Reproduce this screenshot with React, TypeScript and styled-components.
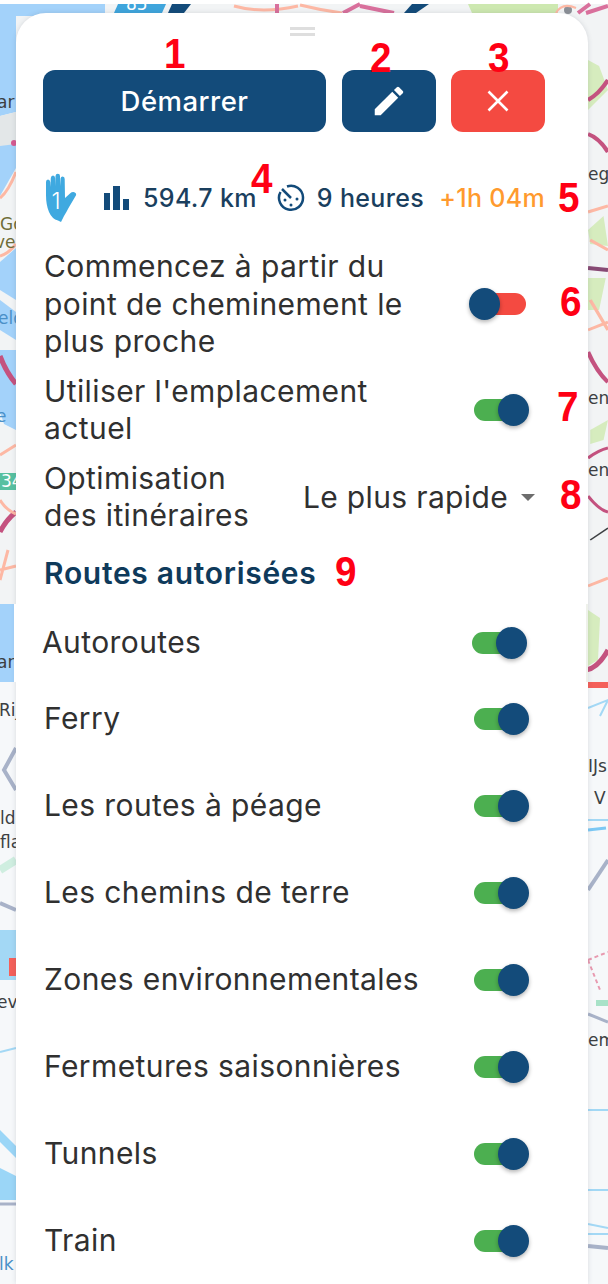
import { createGlobalStyle, styled } from "styled-components";
import { MdEdit } from "react-icons/md";

const GlobalStyle = createGlobalStyle`
  html, body {
    margin: 0;
    padding: 0;
    background: #fff;
  }
`;

const NAVY = "#134b7a";
const INK = "#303030";

const Screen = styled.div`
  position: relative;
  width: 608px;
  height: 1284px;
  overflow: hidden;
  background: #fff;
  font-family: Inter, "Noto Sans", sans-serif;
  color: ${INK};
`;

const MapLayer = styled.svg`
  position: absolute;
  top: 0;
  left: 0;
`;

const Sheet = styled.div`
  position: relative;
  box-sizing: border-box;
  width: 572px;
  height: 1271px;
  margin: 0 0 0 16px;
  top: 13px;
  padding: 14px 28px 0;
  background: #fff;
  border-radius: 30px 30px 0 0;
  box-shadow: 0 0 5px rgba(60, 70, 90, 0.16);
`;

const Grabber = styled.div`
  width: 25px;
  height: 3px;
  margin: 0 auto;
  border-top: 3px solid #dedede;
  border-bottom: 3px solid #dedede;
  background: #fff;
`;

const Actions = styled.div`
  display: flex;
  gap: 15.5px;
  margin: 34px 0 0 -1px;
`;

const ActionButton = styled.button<{ $tone?: "navy" | "red"; $wide?: boolean }>`
  display: flex;
  align-items: center;
  justify-content: center;
  width: ${(p) => (p.$wide ? "283px" : "94px")};
  height: 62px;
  padding: 0;
  border: 0;
  border-radius: 12px;
  background: ${(p) => (p.$tone === "red" ? "#f44a41" : NAVY)};
  color: #fff;
  font-family: inherit;
  font-size: 27.5px;
  font-weight: 500;
  letter-spacing: 0.5px;
`;

const Stats = styled.div`
  display: flex;
  align-items: center;
  height: 50px;
  margin-top: 41px;
`;

const StatText = styled.span<{ $accent?: boolean }>`
  font-size: 25px;
  font-weight: 500;
  letter-spacing: 0.35px;
  color: ${(p) => (p.$accent ? "#ff9a2e" : "#1a3f5e")};
  white-space: nowrap;
`;

const HandIcon = styled.svg`
  margin-right: 26px;
`;

const BarsIcon = styled.svg`
  margin-right: 13px;
`;

const ClockIcon = styled.svg`
  margin: 0 12px 0 20px;
`;

const Extra = styled.div`
  margin-left: 15px;
`;

const SettingRow = styled.div<{ $top: number }>`
  display: flex;
  align-items: center;
  justify-content: space-between;
  margin-top: ${(p) => p.$top}px;
`;

const Label = styled.div<{ $width?: number }>`
  width: ${(p) => (p.$width ? `${p.$width}px` : "auto")};
  font-size: 30px;
  line-height: 37.5px;
  letter-spacing: 0.4px;
`;

const Track = styled.div<{ $on: boolean; $shift: number }>`
  position: relative;
  flex: none;
  width: 53px;
  height: 22px;
  margin-right: ${(p) => p.$shift}px;
  border-radius: 11px;
  background: ${(p) => (p.$on ? "#4caf50" : "#f44a41")};
`;

const Thumb = styled.div<{ $on: boolean }>`
  position: absolute;
  top: -5px;
  ${(p) => (p.$on ? "right: -2px;" : "left: -4px;")}
  width: 31px;
  height: 32px;
  border-radius: 50%;
  background: ${NAVY};
  box-shadow: 0 2px 4px rgba(0, 0, 0, 0.3);
`;

const Select = styled.div`
  display: flex;
  align-items: center;
  gap: 13px;
  margin-right: 25px;
  font-size: 30px;
  letter-spacing: 0.35px;
`;

const Caret = styled.div`
  width: 0;
  height: 0;
  border-left: 7.5px solid transparent;
  border-right: 7.5px solid transparent;
  border-top: 7px solid #6d6d6d;
`;

const Heading = styled.h2`
  height: 40px;
  margin: 18px 0 0;
  font-size: 30px;
  font-weight: 600;
  letter-spacing: 0.7px;
  line-height: 40px;
  color: #0f3a5b;
`;

// this row sits on a pasted strip of the screenshot, 2px left of the sheet
const PatchedRow = styled.div`
  position: relative;
  display: flex;
  align-items: center;
  justify-content: space-between;
  height: 78px;
  margin: 11px -26px 0 -30px;
  padding: 0 0 0 28px;
  background: #fff;

  &::after {
    content: "";
    position: absolute;
    top: 0;
    right: -2px;
    width: 2px;
    height: 78px;
    background: #eef1ea;
  }
`;

const RouteList = styled.div`
  display: flex;
  flex-direction: column;
  gap: 13px;
`;

const RouteRow = styled.div`
  display: flex;
  align-items: center;
  justify-content: space-between;
  height: 74px;
`;

const Marker = styled.span<{ $x: number; $y: number }>`
  position: absolute;
  left: ${(p) => p.$x}px;
  top: ${(p) => p.$y}px;
  font-family: "Liberation Sans", sans-serif;
  font-size: 42px;
  font-weight: 700;
  line-height: 40px;
  color: #ff0014;
  transform: scaleX(0.92);
`;

const MapLabel = styled.text<{ $fill?: string }>`
  font-family: "DejaVu Sans", sans-serif;
  font-size: 17px;
  fill: ${(p) => p.$fill ?? "#3c3f42"};
`;

const routes = [
  "Ferry",
  "Les routes à péage",
  "Les chemins de terre",
  "Zones environnementales",
  "Fermetures saisonnières",
  "Tunnels",
  "Train",
];

const markers = [
  { n: "1", x: 163, y: 34 },
  { n: "2", x: 369, y: 38 },
  { n: "3", x: 487, y: 38 },
  { n: "4", x: 250, y: 159 },
  { n: "5", x: 557, y: 178 },
  { n: "6", x: 559, y: 282 },
  { n: "7", x: 556, y: 387 },
  { n: "8", x: 559, y: 475 },
  { n: "9", x: 334, y: 552 },
];

function Toggle({ on = true, shift = 33 }: { on?: boolean; shift?: number }) {
  return (
    <Track $on={on} $shift={shift}>
      <Thumb $on={on} />
    </Track>
  );
}

function MapBackdrop() {
  return (
    <MapLayer width="608" height="1284" viewBox="0 0 608 1284">
      <rect x="0" y="4" width="608" height="600" fill="#f2f4f5" />
      <rect x="0" y="604" width="608" height="680" fill="#f6f8fa" />

      {/* top band */}
      <path d="M0 4H105V16H0Z" fill="#a3d2fa" />
      <path d="M118 4H166L162 13H114Z" fill="#3fa5dc" />
      <MapLabel x="126" y="10" $fill="#ffffff" fontSize="20">85</MapLabel>
      <path d="M172 4H191L184 13H168Z" fill="#134b7a" />
      <path d="M468 4H558V13H472Z" fill="#cde8b0" />
      <path d="M234 6Q262 14 298 6M300 5Q320 10 342 13" stroke="#fdb8a4" strokeWidth="3" fill="none" />
      <path d="M277 4V13M343 13L360 4M360 6L394 13" stroke="#d9709c" strokeWidth="4" fill="none" />
      <path d="M404 13H416L429 4H412Z" fill="#134b7a" />
      <circle cx="568" cy="10" r="4" fill="#8b8f96" />
      <path d="M556 13Q562 2 576 8" stroke="#fdb8a4" strokeWidth="2" fill="none" />
      <path d="M578 13L590 4M586 13L608 6" stroke="#d9709c" strokeWidth="4" fill="none" />

      {/* left strip */}
      <path d="M0 4H16V112L0 116Z" fill="#a3d2fa" />
      <path d="M0 144H16V168L0 196Z" fill="#a3d2fa" />
      <path d="M0 116L16 112V144L0 146Z" fill="#e3e7e8" />
      <path d="M0 198Q8 192 16 172" stroke="#fdb8a4" strokeWidth="3" fill="none" />
      <path d="M0 256Q8 254 16 244" stroke="#fdb8a4" strokeWidth="3" fill="none" />
      <path d="M0 262L16 248V300L0 290Z" fill="#a3d2fa" />
      <path d="M0 300L16 312V340L0 330Z" fill="#a3d2fa" />
      <path d="M0 350H16V430L4 424L0 412Z" fill="#a3d2fa" />
      <path d="M0 356Q6 372 16 384" stroke="#c4527f" strokeWidth="5" fill="none" />
      <path d="M0 532Q6 520 16 512" stroke="#c4527f" strokeWidth="5" fill="none" />
      <path d="M0 455L16 445M0 500Q6 510 16 514M0 570L16 566M0 580L8 550" stroke="#fdb8a4" strokeWidth="3" fill="none" />
      <rect x="0" y="473" width="16" height="17" fill="#57c0a0" />
      <circle cx="14" cy="143" r="3" fill="#d65a91" />
      <MapLabel x="-3" y="108">ar</MapLabel>
      <MapLabel x="0" y="230" $fill="#6f6d38">Go</MapLabel>
      <MapLabel x="-5" y="248" $fill="#6f6d38">ver</MapLabel>
      <MapLabel x="-2" y="324" $fill="#4a90c8">eld</MapLabel>
      <MapLabel x="-4" y="422" $fill="#4a90c8">e</MapLabel>
      <MapLabel x="1" y="487" $fill="#ffffff" fontSize="14">34</MapLabel>

      {/* left patch */}
      <rect x="0" y="604" width="15" height="78" fill="#a3d2fa" />
      <MapLabel x="-3" y="668">ar</MapLabel>
      <MapLabel x="-1" y="716">Rij</MapLabel>
      <path d="M16 748L4 770L16 790" stroke="#a8b2c8" strokeWidth="4" fill="none" />
      <MapLabel x="0" y="824">lde</MapLabel>
      <MapLabel x="0" y="848">fla</MapLabel>
      <path d="M0 870L16 860" stroke="#cfeee0" strokeWidth="8" fill="none" />
      <path d="M0 903L16 910" stroke="#a8b2c8" strokeWidth="4" fill="none" />
      <path d="M0 930H16V980H0Z" fill="#a3d8f5" />
      <rect x="9" y="958" width="7" height="18" fill="#f4605a" />
      <MapLabel x="-3" y="1008">ev</MapLabel>
      <path d="M0 1052L16 1048" stroke="#a3d8f5" strokeWidth="2" fill="none" />
      <path d="M0 1130L16 1146V1158L0 1142Z" fill="#9bd6f7" />
      <path d="M0 1168L16 1176V1200H0Z" fill="#9bd6f7" />
      <path d="M0 1204H16" stroke="#a8b2c8" strokeWidth="3" fill="none" />
      <MapLabel x="-1" y="1270" $fill="#4a90c8">lk</MapLabel>

      {/* right strip */}
      <g transform="translate(588 0) scale(1.11 1) translate(-590 0)">
        <path d="M590 60L600 66L608 90L590 110Z" fill="#d6ecbe" />
        <path d="M590 100Q600 94 608 80" stroke="#c4527f" strokeWidth="4" fill="none" />
        <path d="M590 134Q600 138 608 152" stroke="#c4527f" strokeWidth="4" fill="none" />
        <path d="M590 230L604 216L608 246L592 244Z" fill="#d6ecbe" />
        <path d="M590 212L608 206M592 240L608 250" stroke="#fdb8a4" strokeWidth="3" fill="none" />
        <path d="M590 268L608 270" stroke="#874a74" strokeWidth="4" fill="none" />
        <path d="M590 278H606L600 310H590Z" fill="#d6ecbe" />
        <path d="M590 330L608 322M592 300L608 330" stroke="#fdb8a4" strokeWidth="3" fill="none" />
        <path d="M590 352Q598 372 608 382" stroke="#c4527f" strokeWidth="4" fill="none" />
        <path d="M592 430L608 420L604 440L592 444Z" fill="#d6ecbe" />
        <path d="M590 458Q600 450 608 448M590 496Q600 510 608 512" stroke="#c4527f" strokeWidth="3" fill="none" />
        <path d="M592 540L608 528" stroke="#3c3f42" strokeWidth="1.5" fill="none" />
        <path d="M590 586L608 578" stroke="#fdb8a4" strokeWidth="3" fill="none" />
      </g>
      <MapLabel x="588" y="180">eg</MapLabel>
      <MapLabel x="588" y="404">en</MapLabel>
      <MapLabel x="588" y="476">en</MapLabel>

      {/* right patch */}
      <rect x="586" y="604" width="22" height="78" fill="#f2f4f5" />
      <path d="M588 610L600 618L598 660L588 666Z" fill="#d6ecbe" />
      <path d="M586 670Q598 668 608 650" stroke="#c4527f" strokeWidth="5" fill="none" />
      <rect x="588" y="682" width="20" height="6" fill="#f4605a" />
      <path d="M588 708L608 700L600 716M588 820H608" stroke="#a3d8f5" strokeWidth="2" fill="none" />
      <MapLabel x="588" y="772">IJs</MapLabel>
      <MapLabel x="594" y="804">V</MapLabel>
      <path d="M588 830L606 828" stroke="#7cc8f4" strokeWidth="3" fill="none" />
      <path d="M588 890L608 860" stroke="#a8b2c8" strokeWidth="4" fill="none" />
      <path d="M588 960L600 990M588 960L608 952" stroke="#e89ab0" strokeWidth="2" strokeDasharray="4 3" fill="none" />
      <rect x="596" y="1000" width="12" height="6" fill="#a8e2c8" />
      <path d="M588 1014L608 1022" stroke="#a8b2c8" strokeWidth="3" fill="none" />
      <MapLabel x="588" y="1046">em</MapLabel>
      <path d="M588 1110H608M588 1190H608M588 1224L608 1228M588 1234H608" stroke="#a3d8f5" strokeWidth="2" fill="none" />
      <path d="M588 1246L608 1248" stroke="#a8b2c8" strokeWidth="4" fill="none" />
    </MapLayer>
  );
}

export default function App() {
  return (
    <Screen>
      <GlobalStyle />
      <MapBackdrop />
      <Sheet>
        <Grabber />
        <Actions>
          <ActionButton $wide>Démarrer</ActionButton>
          <ActionButton>
            <MdEdit size={38} />
          </ActionButton>
          <ActionButton $tone="red">
            <svg width="22" height="22" viewBox="0 0 22 22" fill="none" stroke="#fff" strokeWidth="2.6">
              <path d="M1.500 1.500L20.500 20.500M20.500 1.500L1.500 20.500" />
            </svg>
          </ActionButton>
        </Actions>

        <Stats>
          <HandIcon width="34" height="50" viewBox="0 0 34 50">
            <path
              d="M2 22 L2 9 Q2 6.500 4 6.500 Q6 6.500 6.200 9 L6.400 14 L6.800 5 Q7 2.500 9 2.500 Q11 2.500 11.100 5 L11.300 13 L11.500 3 Q11.700 0.700 13.800 0.700 Q16 0.700 16 3 L16.200 13 L16.600 5.500 Q16.800 3.500 18.700 3.500 Q20.700 3.500 20.700 6 L21 25 L26 20.500 Q29 18 31.500 20 Q33 21.500 31 24 L24.500 35 Q22.500 39 20 43 L17 49 L14 47.500 Q8 46 5 39 Q2 32 2 22 Z"
              fill="#3fa9e0"
            />
            <text x="12" y="36" fill="#fff" fontFamily="Inter, sans-serif" fontSize="23" fontWeight="300" textAnchor="middle">
              1
            </text>
          </HandIcon>
          <BarsIcon width="26" height="24" viewBox="0 0 26 24">
            <rect x="0" y="7" width="6" height="17" fill={NAVY} />
            <rect x="9" y="0" width="7" height="24" fill={NAVY} />
            <rect x="19" y="13" width="6" height="11" fill={NAVY} />
          </BarsIcon>
          <StatText>594.7 km</StatText>
          <ClockIcon width="28" height="28" viewBox="0 0 28 28" fill="none">
            <path d="M10 2.500 A12 12 0 1 1 3.500 8" stroke={NAVY} strokeWidth="2.500" />
            <path d="M5 5 L14 14" stroke={NAVY} strokeWidth="2.500" />
            <circle cx="8" cy="16" r="1.500" fill={NAVY} />
            <circle cx="14" cy="21" r="1.500" fill={NAVY} />
            <circle cx="20" cy="15" r="1.500" fill={NAVY} />
          </ClockIcon>
          <StatText>9 heures</StatText>
          <Extra>
            <StatText $accent>+1h 04m</StatText>
          </Extra>
        </Stats>

        <SettingRow $top={25}>
          <Label $width={380}>Commencez à partir du point de cheminement le plus proche</Label>
          <Toggle on={false} shift={34} />
        </SettingRow>
        <SettingRow $top={12}>
          <Label $width={350}>Utiliser l'emplacement actuel</Label>
          <Toggle />
        </SettingRow>
        <SettingRow $top={12}>
          <Label $width={225}>Optimisation des itinéraires</Label>
          <Select>
            Le plus rapide
            <Caret />
          </Select>
        </SettingRow>

        <Heading>Routes autorisées</Heading>

        <PatchedRow>
          <Label>Autoroutes</Label>
          <Toggle shift={61} />
        </PatchedRow>

        <RouteList>
          {routes.map((route) => (
            <RouteRow key={route}>
              <Label>{route}</Label>
              <Toggle />
            </RouteRow>
          ))}
        </RouteList>
      </Sheet>
      {markers.map((m) => (
        <Marker key={m.n} $x={m.x} $y={m.y}>
          {m.n}
        </Marker>
      ))}
    </Screen>
  );
}
